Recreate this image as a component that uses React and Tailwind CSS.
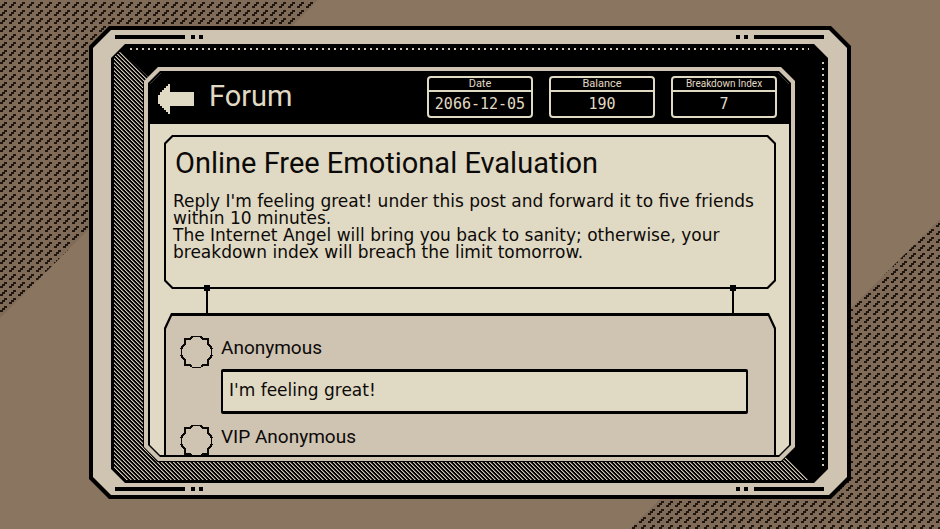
import React from 'react';

const stats = [
  { label: 'Date', value: '2066-12-05', small: false },
  { label: 'Balance', value: '190', small: false },
  { label: 'Breakdown Index', value: '7', small: true },
];

const comments = [
  { id: 1, author: 'Anonymous', text: "I'm feeling great!" },
  { id: 2, author: 'VIP Anonymous', text: '' },
];

// Stepped dashes used on the two desk corners
const DashPattern = ({ id }) => (
  <svg className="w-full h-full" shapeRendering="crispEdges" aria-hidden="true">
    <defs>
      <pattern id={id} width="9" height="8" patternUnits="userSpaceOnUse">
        <rect width="9" height="8" fill="#1d150e" fillOpacity="0.1" />
        <rect x="0" y="6" width="3" height="2" fill="#1d150e" />
        <rect x="2" y="4" width="3" height="2" fill="#1d150e" />
        <rect x="4" y="2" width="3" height="2" fill="#1d150e" />
      </pattern>
    </defs>
    <rect width="100%" height="100%" fill={`url(#${id})`} />
  </svg>
);

// Diagonal pixel lines on the lit faces of the bezel
const Hatch = () => (
  <svg className="w-full h-full" shapeRendering="crispEdges" aria-hidden="true">
    <defs>
      <pattern id="hatch" width="4" height="4" patternUnits="userSpaceOnUse">
        <path d="M0 0h1v1H0zM1 1h1v1H1zM2 2h1v1H2zM3 3h1v1H3z" fill="#cfc3b2" />
        <path d="M1 0h1v1H1zM2 1h1v1H2zM3 2h1v1H3zM0 3h1v1H0z" fill="#6b655c" />
      </pattern>
    </defs>
    <rect width="100%" height="100%" fill="url(#hatch)" />
  </svg>
);

const Bars = ({ className }) => (
  <div className={`flex items-center justify-between shrink-0 ${className}`}>
    <div className="flex items-center gap-1">
      <span className="w-[70px] h-1 bg-black mr-[2px]" />
      <span className="size-1 bg-black" />
      <span className="size-1 bg-black" />
    </div>
    <div className="flex items-center gap-1">
      <span className="size-1 bg-black" />
      <span className="size-1 bg-black" />
      <span className="w-[70px] h-1 bg-black ml-[2px]" />
    </div>
  </div>
);

const Stat = ({ label, value, small }) => (
  <dl className="w-[106px] h-[42px] flex flex-col border-2 border-[#e0d9c4] rounded text-center text-[#e0d9c4]">
    <dt
      className={`h-[14px] shrink-0 border-b-2 border-[#e0d9c4] leading-[12px] ${
        small ? 'text-[10px]' : 'text-[11px]'
      }`}
    >
      {label}
    </dt>
    <dd className="font-['DejaVu_Sans_Mono',monospace] text-[15px] leading-6">{value}</dd>
  </dl>
);

const Avatar = () => (
  <svg
    className="shrink-0"
    width="33"
    height="34"
    viewBox="0 0 33 34"
    fill="none"
    stroke="#0c0a08"
    shapeRendering="crispEdges"
    aria-hidden="true"
  >
    <path d="M12 1.500H21M1.500 13V21M31.500 13V21M12 32.500H21" strokeWidth="1" />
    <path
      d="M12 2L10 4H5V9L3 11L1 14M21 2L23 4H28V9L30 11L32 14M1 20L3 23L5 25V30H10L12 32M32 20L30 23L28 25V30H23L21 32"
      strokeWidth="2"
    />
  </svg>
);

const Comment = ({ author, text }) => (
  <li className="flex items-start gap-2">
    <Avatar />
    <div className="flex-1">
      <h3 className="text-[19px] leading-[26px]">{author}</h3>
      {text && (
        <p className="mt-2 h-[45px] px-[6px] border-y-3 border-x-2 border-black rounded-[2px] bg-[#e0d9c4] font-['DejaVu_Sans',sans-serif] text-[17px] leading-9">
          {text}
        </p>
      )}
    </div>
  </li>
);

const Connector = () => (
  <span className="w-[6px] flex flex-col items-center -mt-1">
    <span className="size-[6px] bg-black" />
    <span className="w-[2px] h-[22px] bg-black" />
  </span>
);

const Screen = () => (
  <div className="flex-1 min-h-0 flex flex-col overflow-hidden bg-[#e0d9c4] [clip-path:polygon(11px_0,calc(100%-11px)_0,100%_11px,100%_calc(100%-10px),calc(100%-10px)_100%,10px_100%,0_calc(100%-10px),0_11px)]">
    {/* Header */}
    <header className="h-[51px] shrink-0 flex items-center justify-between pl-2 pr-3 bg-black text-[#e0d9c4]">
      <div className="flex items-center gap-[15px]">
        <button type="button" aria-label="Back" className="cursor-pointer">
          <svg width="36" height="30" viewBox="0 0 36 30" fill="#e0d9c4" shapeRendering="crispEdges">
            <path d="M12 0V8H36V22H12V30H10V28H8V26H6V24H4V22H2V20H0V11H2V8H4V6H6V4H8V2H10V0Z" />
          </svg>
        </button>
        <h1 className="pb-[6px] text-[29px] leading-8">Forum</h1>
      </div>
      <div className="flex gap-4 pb-[3px]">
        {stats.map((s) => (
          <Stat key={s.label} {...s} />
        ))}
      </div>
    </header>

    <main className="flex-1 min-h-0 overflow-hidden pt-[11px] pl-[14px] pr-[13px]">
      {/* Post */}
      <article className="p-[2px] bg-black [clip-path:polygon(8px_0,calc(100%-8px)_0,100%_8px,100%_calc(100%-8px),calc(100%-8px)_100%,8px_100%,0_calc(100%-8px),0_8px)]">
        <div className="px-[7px] pt-[10px] pb-[26px] bg-[#e0d9c4] [clip-path:polygon(7px_0,calc(100%-7px)_0,100%_7px,100%_calc(100%-7px),calc(100%-7px)_100%,7px_100%,0_calc(100%-7px),0_7px)]">
          <h2 className="px-[2px] text-[29px] leading-8">Online Free Emotional Evaluation</h2>
          <p className="mt-[14px] font-['DejaVu_Sans',sans-serif] text-[17px] leading-[17px]">
            Reply I'm feeling great! under this post and forward it to five friends
            <br />
            within 10 minutes.
            <br />
            The Internet Angel will bring you back to sanity; otherwise, your
            <br />
            breakdown index will breach the limit tomorrow.
          </p>
        </div>
      </article>

      <div className="relative flex justify-between px-10">
        <Connector />
        <Connector />
      </div>

      {/* Replies */}
      <section className="pt-[3px] px-[2px] bg-black [clip-path:polygon(7px_0,calc(100%-7px)_0,100%_15px,100%_100%,0_100%,0_15px)]">
        <ul className="flex flex-col gap-[10px] pt-[19px] pb-5 pl-[14px] pr-[26px] bg-[#cfc3b2] [clip-path:polygon(6px_0,calc(100%-6px)_0,100%_13px,100%_100%,0_100%,0_13px)]">
          {comments.map((c) => (
            <Comment key={c.id} {...c} />
          ))}
        </ul>
      </section>
    </main>
  </div>
);

const Bezel = () => (
  <div className="relative flex-1 min-h-0 flex flex-col pt-[23px] px-[33px] pb-[22px] bg-black [clip-path:polygon(14px_0,calc(100%-14px)_0,100%_14px,100%_calc(100%-14px),calc(100%-14px)_100%,14px_100%,0_calc(100%-14px),0_14px)]">
    {/* Hatching on the left and bottom faces */}
    <div className="absolute inset-0 [clip-path:polygon(3px_13px,10px_7px,38px_34px,32px_40px,32px_calc(100%-36px),46px_calc(100%-21px),calc(100%-46px)_calc(100%-21px),calc(100%-42px)_calc(100%-26px),calc(100%-18px)_calc(100%-3px),14px_calc(100%-3px),3px_calc(100%-14px))]">
      <Hatch />
    </div>
    {/* Rivets */}
    <div className="absolute top-1 left-[19px] right-[19px] h-[2px] bg-[repeating-linear-gradient(90deg,#cfc3b2_0_2px,transparent_2px_6px)]" />
    <div className="absolute top-[18px] bottom-[14px] right-1 w-[2px] bg-[repeating-linear-gradient(180deg,#cfc3b2_0_2px,transparent_2px_6px)]" />

    <div className="relative flex-1 min-h-0 flex flex-col p-1 bg-[#cfc3b2] [clip-path:polygon(14px_0,calc(100%-14px)_0,100%_14px,100%_calc(100%-14px),calc(100%-14px)_100%,14px_100%,0_calc(100%-14px),0_14px)]">
      <div className="flex-1 min-h-0 flex flex-col p-[2px] bg-black [clip-path:polygon(12px_0,calc(100%-12px)_0,100%_12px,100%_calc(100%-12px),calc(100%-12px)_100%,12px_100%,0_calc(100%-12px),0_12px)]">
        <Screen />
      </div>
    </div>
  </div>
);

const App = () => {
  return (
    <div className="relative h-screen min-h-[320px] overflow-hidden flex flex-col pt-[26px] pb-[30px] px-[89px] bg-[#8a7560] font-[Roboto,sans-serif] text-[#0c0a08]">
      <div className="absolute top-0 left-0 size-[318px] [clip-path:polygon(0_0,100%_0,0_100%)]">
        <DashPattern id="dash-top" />
      </div>
      <div className="absolute bottom-0 right-0 size-[310px] [clip-path:polygon(100%_0,100%_100%,0_100%)]">
        <DashPattern id="dash-bottom" />
      </div>

      <div className="relative flex-1 min-h-0 flex flex-col p-1 bg-black [clip-path:polygon(20px_0,calc(100%-20px)_0,100%_20px,100%_calc(100%-20px),calc(100%-20px)_100%,20px_100%,0_calc(100%-20px),0_20px)]">
        <div className="flex-1 min-h-0 flex flex-col pl-[18px] pr-[19px] bg-[#cfc3b2] [clip-path:polygon(18px_0,calc(100%-18px)_0,100%_18px,100%_calc(100%-18px),calc(100%-18px)_100%,18px_100%,0_calc(100%-18px),0_18px)]">
          <Bars className="h-[14px] px-1" />
          <Bezel />
          <Bars className="h-3 px-1" />
        </div>
      </div>
    </div>
  );
};

export default App;
